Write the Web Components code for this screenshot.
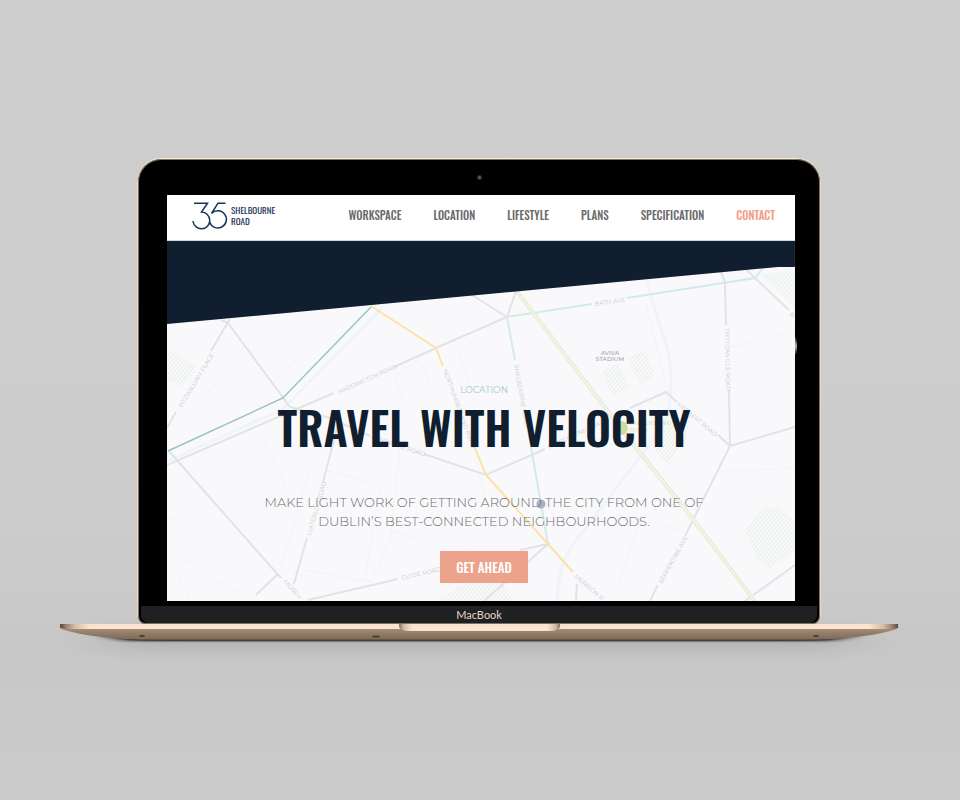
<!DOCTYPE html>
<html lang="en">
<head>
<meta charset="utf-8">
<title>35 Shelbourne Road</title>
<style>
  html { background: #cdcdcd; }
  body { margin: 0; font-family: Montserrat, "Open Sans", sans-serif; }
</style>
</head>
<body>
<laptop-stage></laptop-stage>
<script>
const define = (name, html) => customElements.define(name, class extends HTMLElement {
  constructor() {
    super();
    const t = document.createElement('template');
    t.innerHTML = html;
    this.attachShadow({ mode: 'open' }).append(t.content.cloneNode(true));
  }
});

define('site-logo', `
<style>
  :host { display: block; }
  a { display: flex; align-items: center; gap: 3px; color: #1a3358; text-decoration: none; }
  svg { width: 36px; height: 28px; display: block; }
  .name { display: flex; flex-direction: column; font: 400 9px/11px Oswald, "Roboto Condensed", sans-serif; }
</style>
<a href="#home" aria-label="35 Shelbourne Road">
  <svg viewBox="0 0 36 28" fill="none" stroke="currentColor" stroke-width="1.5" aria-hidden="true">
    <path d="M2 1.2H15.500L9.500 10A8.400 8.400 0 1 1 1 19"/>
    <path d="M33.500 1.200H26L19.500 11.500A8.600 8.600 0 1 1 17.600 20"/>
  </svg>
  <span class="name"><span>SHELBOURNE</span><span>ROAD</span></span>
</a>`);

define('nav-link', `
<style>
  :host { display: block; color: #6a6a6a; }
  :host([current]) { color: #f29c84; }
  a { color: inherit; text-decoration: none; font: 500 11px/16px Oswald, "Roboto Condensed", sans-serif; }
</style>
<a href="#section"><slot></slot></a>`);

define('site-header', `
<style>
  :host { display: flex; align-items: center; justify-content: space-between; height: 45px;
    padding: 0 20px 0 25px; background: #fff; border-bottom: 1px solid #cddbd9; }
  site-logo { padding-bottom: 4px; }
  nav { display: flex; gap: 32px; padding-bottom: 6px; }
</style>
<site-logo></site-logo>
<nav aria-label="Main">
  <nav-link>WORKSPACE</nav-link>
  <nav-link>LOCATION</nav-link>
  <nav-link>LIFESTYLE</nav-link>
  <nav-link>PLANS</nav-link>
  <nav-link>SPECIFICATION</nav-link>
  <nav-link current>CONTACT</nav-link>
</nav>`);

define('street-map', `
<style>
  :host { display: block; background: #f9f9fb; }
  svg { display: block; width: 100%; height: 100%; }
  .road { stroke: #e3e3e5; stroke-width: 2; }
  .lane { stroke: #f4f4f6; stroke-width: 1; }
  .water { stroke: #eef4fa; stroke-width: 3; }
  .bus { stroke: #d3ebe6; stroke-width: 2; }
  .main { stroke: #fbe2a6; stroke-width: 2; }
  .luas { stroke: #96c3c2; stroke-width: 1.4; }
  text { font: 400 6px Montserrat, sans-serif; fill: #cacace; stroke: none; }
  .place { fill: #a0a5b0; font-weight: 500; text-anchor: middle; }
  .station { fill: #dbe4b8; font-weight: 500; }
</style>
<svg viewBox="167 241 628 360" preserveAspectRatio="xMidYMid slice" fill="none" aria-hidden="true">
  <defs>
    <pattern id="green" width="3" height="3" patternUnits="userSpaceOnUse" patternTransform="rotate(40)">
      <path d="M.5 0V3" stroke="#e6efe4" stroke-width="1"/>
    </pattern>
  </defs>
  <g fill="url(#green)">
    <path d="M168 350L198 366L182 386L168 380Z"/>
    <path d="M602 372L618 363L630 388L612 396Z"/>
    <path d="M628 358L645 350L655 376L640 385Z"/>
    <path d="M662 425L690 415L686 440L668 465L655 450Z"/>
    <path d="M745 530L760 510L776 506L795 520V550L770 568L758 560Z"/>
    <path d="M762 275L795 270V308Z"/>
    <path d="M436 601L470 580H502L514 601Z"/>
  </g>
  <g class="lane">
    <path d="M262 320L220 380L186 412M330 310L250 395M345 305L258 402M312 317L335 340M300 440L285 455"/>
    <path d="M395 375L420 360L430 380L405 405ZM455 345L475 400M475 455L490 520L440 600"/>
    <path d="M258 430L286 485L254 540M286 485L300 470M168 520L210 505M168 568L188 560L215 580L240 592L262 560M175 568L190 601M188 560L212 601"/>
    <path d="M310 470L280 570M325 470L380 485L365 580M400 450L390 540L372 580M304 570L372 582M390 530L440 545"/>
    <path d="M645 300L670 400M730 348L795 330M730 355L795 405M718 472L795 468M640 520L618 585M620 515L680 530"/>
  </g>
  <g class="water">
    <path d="M385 305L283 409L168 461"/>
    <path d="M647 281L655 310L668 350Q674 380 668 415Q660 435 640 457L578 538Q556 565 558 601"/>
  </g>
  <g class="road">
    <path d="M230 319L211 351M176 412L167 428M221 320L228 323L290 407"/>
    <path d="M167 465L334 393M394 367L436 348L507 317L472 295M507 317L516 291"/>
    <path d="M721 272L725 282L726 325M729 390L730 446L795 427M730 446L718 435M746 269L755 278L789 310"/>
    <path d="M677 402L666 392L630 408M545 449L486 475L424 454M370 436L330 418L290 407"/>
    <path d="M730 446L685 536M658 585L650 601M795 565L745 601"/>
    <path d="M168 450L281 578M278 574L256 595M338 425L323 482M307 538L294 584M308 600L398 579"/>
    <path d="M520 550L548 544L484 601M577 584L576 601"/>
  </g>
  <path class="bus" d="M515 360L507 317L592 304M627 298L755 278L763 268M529 435L548 544"/>
  <path class="main" d="M371 306L436 348L443 366M470 436L486 475L548 544L573 572"/>
  <path class="luas" d="M371 307L283 398L168 451"/>
  <g>
    <path d="M517 291L590 388L622 430L692 518L755 601" stroke-width="4" stroke="#f4f5ea"/>
    <path d="M516 292L589 389L621 431L691 519L753 601" stroke-width="1" stroke="#e4e8d0"/>
    <path d="M519 292L592 388L624 430L694 518L756 601" stroke-width="1" stroke-dasharray="1 1" stroke="#d3d9b0"/>
  </g>
  <circle cx="621" cy="428" r="7" fill="#cfdc9f"/>
  <g>
    <text transform="translate(182 408) rotate(-59)">FITZWILLIAM PLACE</text>
    <text transform="translate(339 394) rotate(-24)">HADDINGTON ROAD</text>
    <text transform="translate(443 370) rotate(70)">NORTHUMBERLAND ROAD</text>
    <text transform="translate(514 365) rotate(80)">SHELBOURNE ROAD</text>
    <text transform="translate(595 306) rotate(-8)">BATH AVE</text>
    <text transform="translate(725 328) rotate(89)">TRITTONVILLE ROAD</text>
    <text transform="translate(789 315) rotate(42)">B</text>
    <text transform="translate(677 405) rotate(40)">HERBERT ROAD</text>
    <text transform="translate(549 449) rotate(-25)">LANSDOWNE ROAD</text>
    <text transform="translate(371 439) rotate(18)">PEMBROKE ROAD</text>
    <text transform="translate(311 536) rotate(-74)">WATERLOO ROAD</text>
    <text transform="translate(283 582) rotate(48)">MOREH</text>
    <text transform="translate(402 580) rotate(-13)">CLYDE ROAD</text>
    <text transform="translate(574 577) rotate(41)">MERRION R</text>
    <text transform="translate(662 584) rotate(-61)">SERPENTINE AVE</text>
    <text class="station" x="629" y="425">LANSDOWNE</text>
    <text class="station" x="629" y="432">ROAD</text>
    <text class="place" x="610" y="355">AVIVA</text>
    <text class="place" x="610" y="361">STADIUM</text>
  </g>
  <circle cx="541" cy="504" r="4.500" fill="#aab0bf"/>
  <path d="M167 241H795V267H778L167 324Z" fill="#101e2f"/>
</svg>`);

define('hero-panel', `
<style>
  :host { display: grid; overflow: hidden; height: 360px; }
  street-map, section { grid-area: 1 / 1; min-width: 0; min-height: 0; }
  section { display: flex; flex-direction: column; align-items: center; text-align: center;
    padding: 142px 0 0 6px; z-index: 1; }
  .eyebrow { margin: 0; font-size: 9px; line-height: 14px; color: #9fcdc3; }
  h1 { margin: 0; font: 600 45px/60px Oswald, "Roboto Condensed", sans-serif; color: #101e2f; white-space: nowrap; }
  .lead { margin: 36px 0 0; font-weight: 300; font-size: 13px; line-height: 19px; color: #6c6c6e; max-width: 448px; }
  button { margin: 20px 0 0; border: 0; border-radius: 0; padding: 0 16px; height: 32px;
    background: #eda28c; color: #fff; font: 500 13px/32px Oswald, "Roboto Condensed", sans-serif; }
</style>
<street-map></street-map>
<section>
  <p class="eyebrow">LOCATION</p>
  <h1>TRAVEL WITH VELOCITY</h1>
  <p class="lead">MAKE LIGHT WORK OF GETTING AROUND THE CITY FROM ONE OF DUBLIN’S BEST-CONNECTED NEIGHBOURHOODS.</p>
  <button type="button">GET AHEAD</button>
</section>`);

define('laptop-lid', `
<style>
  :host { display: block; box-sizing: border-box; background: #000; border: 1px solid #f0d8b6; border-top-color: #f8ebd9;
    border-bottom: 0; border-radius: 24px 24px 8px 8px; padding: 0 3px 1px; box-shadow: inset 0 0 0 1px #7d7266; }
  .camera { display: grid; place-items: center; height: 36px; }
  .camera i { width: 3px; height: 3px; border: 1px solid #2e2e30; border-radius: 50%; background: #555; }
  .screen { position: relative; margin: 0 22px 0 26px; }
  .glint { position: absolute; right: -2px; top: 142px; width: 2px; height: 18px;
    border-radius: 0 2px 2px 0 / 0 9px 9px 0; background: linear-gradient(#222, #bbb, #222); }
  .chin { margin-top: 5px; height: 17px; background: linear-gradient(#202124, #1e2022); border-radius: 0 0 8px 8px;
    text-align: center; color: #e8d5c3; font: 400 11px/18px Lato, "Open Sans", sans-serif; }
</style>
<div class="camera"><i></i></div>
<div class="screen"><slot></slot><div class="glint"></div></div>
<div class="chin">MacBook</div>`);

define('laptop-base', `
<style>
  :host { display: block; }
  svg { display: block; width: 100%; height: 36px; overflow: visible; }
</style>
<svg viewBox="0 0 838 36" preserveAspectRatio="none" aria-hidden="true">
  <defs>
    <linearGradient id="under" x2="0" y2="1">
      <stop offset="0" stop-color="#a58c74"/><stop offset=".35" stop-color="#927d68"/>
      <stop offset=".8" stop-color="#806c59"/><stop offset="1" stop-color="#3b2f28"/>
    </linearGradient>
    <linearGradient id="rim">
      <stop offset="0" stop-color="#5c4738"/><stop offset=".008" stop-color="#a08570"/><stop offset=".018" stop-color="#d5bfa9"/>
      <stop offset=".035" stop-color="#fae3d0"/><stop offset=".965" stop-color="#fae3d0"/>
      <stop offset=".982" stop-color="#d5bfa9"/><stop offset=".992" stop-color="#a08570"/><stop offset="1" stop-color="#5c4738"/>
    </linearGradient>
    <linearGradient id="notch">
      <stop offset="0" stop-color="#84705e"/><stop offset=".03" stop-color="#d6bda5"/><stop offset=".08" stop-color="#fae3d0"/>
      <stop offset=".92" stop-color="#fae3d0"/><stop offset=".97" stop-color="#d6bda5"/><stop offset="1" stop-color="#84705e"/>
    </linearGradient>
    <filter id="soft" x="-20%" y="-200%" width="140%" height="500%"><feGaussianBlur stdDeviation="10 1"/></filter>
    <filter id="haze" x="-20%" y="-200%" width="140%" height="500%"><feGaussianBlur stdDeviation="30 8"/></filter>
  </defs>
  <path d="M50 8H788V24H50Z" fill="#000" opacity=".12" filter="url(#haze)"/>
  <path d="M45 12H793L770 17H68Z" fill="#18181a" filter="url(#soft)"/>
  <path d="M1 5Q30 15 110 17H728Q808 15 837 5Z" fill="url(#under)"/>
  <path d="M0 0H838V4Q836 5 832 5H6Q2 5 0 4Z" fill="url(#rim)"/>
  <path d="M339 0H500V3Q498 7 490 7H349Q341 7 339 3Z" fill="url(#notch)"/>
  <g fill="#4a3c31"><ellipse cx="82" cy="12" rx="3" ry="1"/><ellipse cx="316" cy="12.500" rx="4" ry="1"/><ellipse cx="756" cy="12" rx="3" ry="1"/></g>
</svg>`);

define('laptop-stage', `
<style>
  :host { display: flex; flex-direction: column; justify-content: center; box-sizing: border-box; min-height: 100vh;
    padding: 18px 6.45% 0 6.25%;
    background: linear-gradient(#cecece, #cdcdcd 60%, #cacaca 74%, #c7c7c7 81%, #c9c9c9 88%, #cbcbcb); }
  laptop-lid { margin: 0 9.2%; }
</style>
<laptop-lid><site-header></site-header><hero-panel></hero-panel></laptop-lid>
<laptop-base></laptop-base>`);
</script>
</body>
</html>
